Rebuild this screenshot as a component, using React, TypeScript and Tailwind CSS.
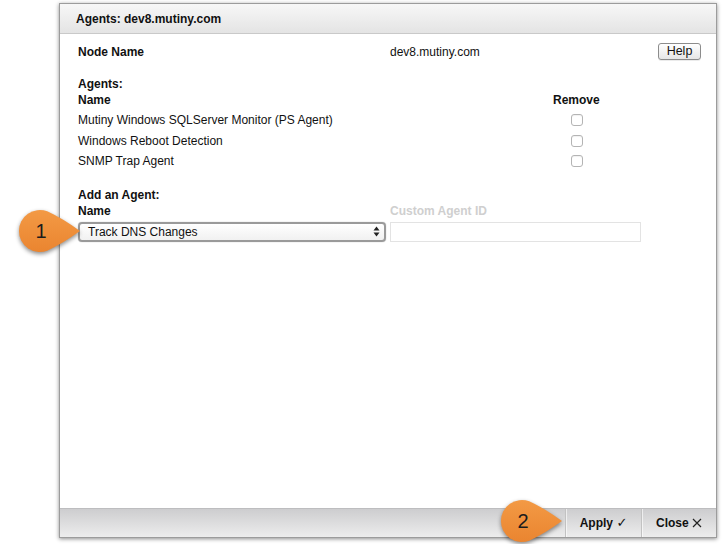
import React from "react";

const agents = [
  "Mutiny Windows SQLServer Monitor (PS Agent)",
  "Windows Reboot Detection",
  "SNMP Trap Agent",
];

const Callout: React.FC<{ label: string; className: string }> = ({
  label,
  className,
}) => (
  <div className={`absolute h-[44px] w-[64px] ${className}`}>
    <svg
      width="64"
      height="44"
      viewBox="0 0 64 44"
      className="absolute left-0 top-0 drop-shadow-[0_2px_2px_rgba(0,0,0,0.45)]"
    >
      <defs>
        <linearGradient id={`g${label}`} x1="0" y1="0" x2="0" y2="1">
          <stop offset="0" stopColor="#f39a45" />
          <stop offset="1" stopColor="#ea8530" />
        </linearGradient>
      </defs>
      <path
        d="M62 22 Q44 9 29.2 2.3 A21 21 0 1 0 29.2 41.7 Q44 35 62 22 Z"
        fill={`url(#g${label})`}
      />
    </svg>
    <span className="absolute left-[1px] top-0 flex h-[44px] w-[44px] items-center justify-center text-[20px] text-[#1c1c1c]">
      {label}
    </span>
  </div>
);

const Checkbox = () => (
  <span className="block h-[12px] w-[12px] rounded-[3px] border border-[#b4b4b4] bg-white shadow-[inset_0_1px_1px_rgba(0,0,0,0.06)]" />
);

export default function App() {
  return (
    <div className="relative h-[544px] w-[723px] overflow-hidden bg-white font-['Liberation_Sans',Arial,sans-serif] text-[12px] text-[#111]">
      <div className="ml-[59px] mt-[3px] flex h-[535px] w-[658px] flex-col border border-[#9c9c9c] bg-white shadow-[0_1px_4px_rgba(0,0,0,0.45)]">
        {/* header */}
        <div className="flex h-[30px] items-center border-b border-[#c9c9c9] bg-gradient-to-b from-[#f7f7f7] to-[#e4e4e4] pl-[16px] font-bold">
          Agents: dev8.mutiny.com
        </div>

        {/* body */}
        <div className="flex-1 pl-[18px] pr-[15px]">
          <div className="mt-[9px] flex h-[17px] items-center">
            <span className="w-[312px] font-bold">Node Name</span>
            <span className="flex-1">dev8.mutiny.com</span>
            <button className="h-[17px] w-[43px] rounded-[3px] border border-[#8c8c8c] bg-gradient-to-b from-white to-[#e6e6e6] text-[12.5px] leading-[15px] shadow-[0_1px_0_rgba(0,0,0,0.08)]">
              Help
            </button>
          </div>

          <div className="mt-[16px] h-[16px] font-bold leading-[16px]">Agents:</div>
          <div className="flex h-[16px] font-bold leading-[16px]">
            <span className="w-[475px]">Name</span>
            <span>Remove</span>
          </div>

          <div className="mt-[2px]">
            {agents.map((a) => (
              <div key={a} className="flex h-[20.5px] items-center">
                <span className="w-[493px]">{a}</span>
                <Checkbox />
              </div>
            ))}
          </div>

          <div className="mt-[15px] h-[16px] font-bold leading-[16px]">
            Add an Agent:
          </div>
          <div className="flex h-[16px] font-bold leading-[16px]">
            <span className="w-[312px]">Name</span>
            <span className="text-[#cfcfcf]">Custom Agent ID</span>
          </div>

          <div className="mt-[3px] flex h-[20px]">
            <div className="flex h-[20px] w-[308px] items-center justify-between rounded-[4px] border-2 border-[#9a9a9a] bg-gradient-to-b from-white to-[#f1f1f1] pl-[8px] pr-[4px] shadow-[0_0_1px_rgba(0,0,0,0.4)]">
              <span className="leading-[16px]">Track DNS Changes</span>
              <svg width="7" height="11" viewBox="0 0 7 11">
                <path d="M3.5 0.5 L6.5 4.5 H0.5 Z" fill="#222" />
                <path d="M3.5 10.5 L6.5 6.5 H0.5 Z" fill="#222" />
              </svg>
            </div>
            <div className="ml-[4px] h-[20px] w-[251px] border border-[#e3e3e3] bg-white" />
          </div>
        </div>

        {/* footer */}
        <div className="flex h-[29px] items-stretch justify-end border-t border-[#bdbdbf] bg-gradient-to-b from-[#cdcdcf] to-[#ededed]">
          <div className="flex w-[76px] items-center justify-center border-l border-[#c2c2c2] font-bold shadow-[inset_1px_0_0_rgba(255,255,255,0.6)]">
            Apply&nbsp;<span className="font-['DejaVu_Sans',sans-serif] text-[13px] font-bold">✓</span>
          </div>
          <div className="flex w-[75px] items-center justify-center border-l border-[#c2c2c2] font-bold shadow-[inset_1px_0_0_rgba(255,255,255,0.6)]">
            Close&nbsp;
            <svg width="10" height="10" viewBox="0 0 10 10">
              <path d="M1 1 L9 9 M9 1 L1 9" stroke="#222" strokeWidth="1.2" />
            </svg>
          </div>
        </div>
      </div>

      <Callout label="1" className="left-[18px] top-[209px]" />
      <Callout label="2" className="left-[500px] top-[499px]" />
    </div>
  );
}
